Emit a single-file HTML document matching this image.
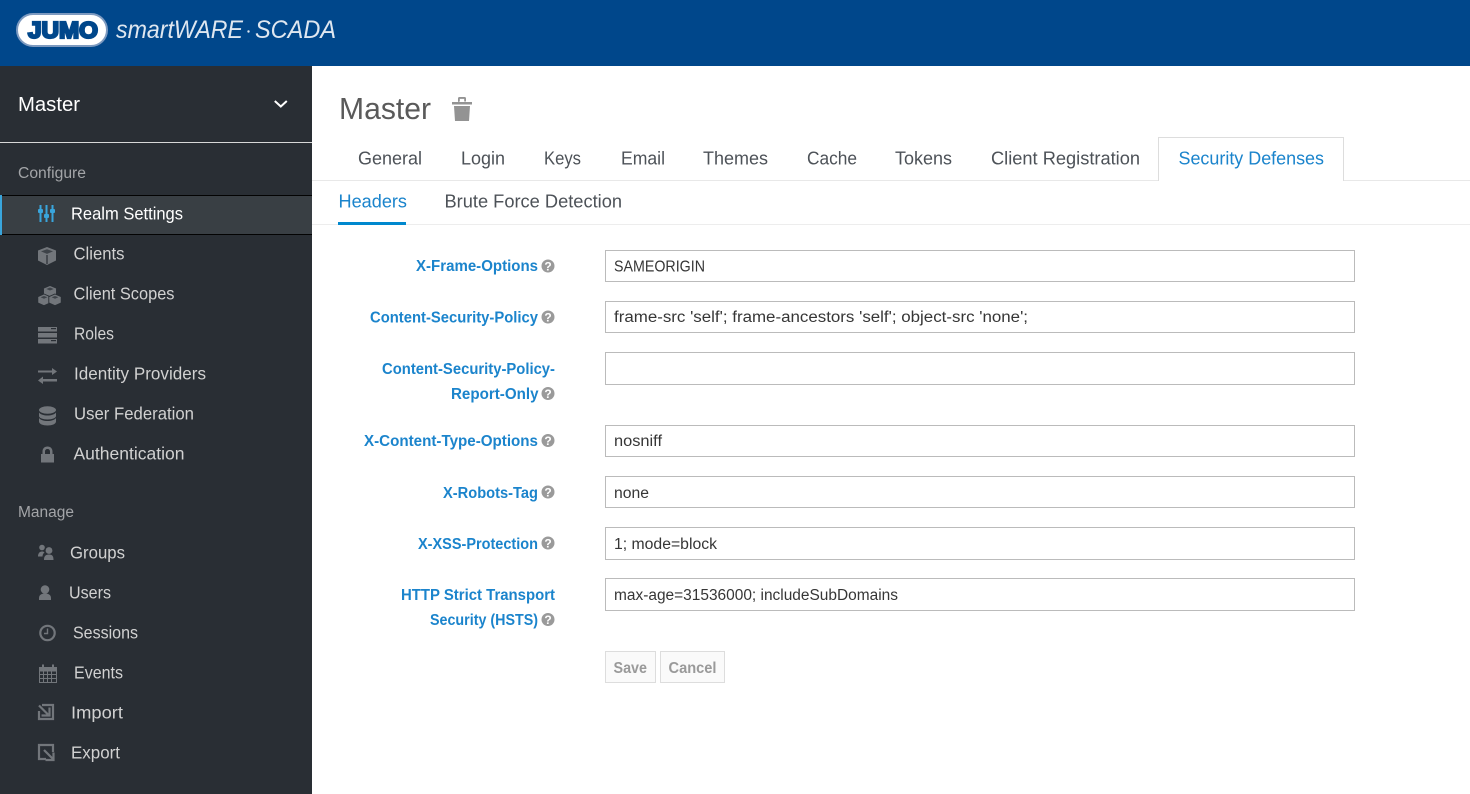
<!DOCTYPE html>
<html lang="en"><head><meta charset="utf-8"><title>Master</title>
<style>
html,body{margin:0;padding:0;width:1470px;height:794px;overflow:hidden;background:#fff}
svg{display:block}
text{font-family:"Liberation Sans",sans-serif}
.n{font-size:17.5px;fill:#d1d1d1}
.g{font-size:15.5px;fill:#a3a5a8}
.t{font-size:18.5px;fill:#4d5258}
.l{font-size:15.5px;font-weight:700;fill:#1b84cc}
.i{font-size:15.5px;fill:#363636}
.b{font-size:15.5px;font-weight:700;fill:#9a9a9a}
.ic{fill:#72767b}
.f{fill:#fff;stroke:#bbb;stroke-width:1}
</style></head><body>
<svg xmlns="http://www.w3.org/2000/svg" width="1470" height="794" viewBox="0 0 1470 794">
<defs>
<g id="h"><circle cx="6.500" cy="6.500" r="6.500" fill="#9a9a9a"/><text x="6.500" y="11" text-anchor="middle" style="font-size:12px;font-weight:700;fill:#fff">?</text></g>
</defs>
<!-- header -->
<rect width="1470" height="66" fill="#00478b"/>
<rect x="17" y="14" width="90" height="32" rx="16" fill="#fff" stroke="#7d9ac0" stroke-width="2"/>
<text x="28" y="38" textLength="70" lengthAdjust="spacingAndGlyphs" style="font-size:23px;font-weight:700;fill:#00478b;stroke:#00478b;stroke-width:2.200">JUMO</text>
<g style="font-style:italic;font-size:25px">
<text x="116" y="38" textLength="127" lengthAdjust="spacingAndGlyphs" fill="#dfe7f0">smartWARE</text>
<circle cx="248.500" cy="31.500" r="1.200" fill="#dfe7f0"/>
<text x="255" y="38" textLength="81" lengthAdjust="spacingAndGlyphs" fill="#dfe7f0">SCADA</text>
</g>
<!-- sidebar -->
<rect y="66" width="312" height="728" fill="#292e34"/>
<text x="18" y="111" textLength="62" lengthAdjust="spacingAndGlyphs" style="font-size:20.5px;fill:#fff">Master</text>
<path d="M274.800 101l6 5.500 6-5.500" fill="none" stroke="#fff" stroke-width="2"/>
<rect y="142" width="312" height="1" fill="#d8d8d8"/>
<text class="g" x="18" y="178" textLength="68" lengthAdjust="spacingAndGlyphs">Configure</text>
<rect y="195" width="312" height="40" fill="#393f44"/>
<rect y="195" width="312" height="1" fill="#030303"/>
<rect y="234" width="312" height="1" fill="#030303"/>
<rect y="195" width="2" height="40" fill="#39a5dc"/>
<!-- sliders -->
<g fill="#39a5dc">
<rect x="39.500" y="205" width="2" height="17"/><rect x="45.500" y="205" width="2" height="17"/><rect x="51.500" y="205" width="2" height="17"/>
<rect x="38" y="209" width="5" height="4" rx="1"/><rect x="44" y="214" width="5" height="4" rx="1"/><rect x="50" y="209" width="5" height="4" rx="1"/>
</g>
<text class="n" x="71" y="219.500" textLength="112" lengthAdjust="spacingAndGlyphs" style="fill:#fff">Realm Settings</text>
<!-- cube -->
<path class="ic" d="M47 247l9 3.500v10L47 265l-9-4.500v-10z"/>
<path d="M47 249.200l-6 2.200 6 2.500 6-2.500z" fill="#3e4349"/>
<path d="M47 255v9" stroke="#292e34" stroke-width="1.200"/>
<text class="n" x="73.500" y="259.500" textLength="51" lengthAdjust="spacingAndGlyphs">Clients</text>
<!-- cubes -->
<g class="ic" stroke="#292e34" stroke-width=".9">
<path d="M50 285.500l6.500 2.700v6.500L50 297.500l-6.500-2.800v-6.500z"/>
<path d="M44 294l6.200 2.700v6.200L44 305.700l-6.200-2.800v-6.200z"/>
<path d="M55 294l6.200 2.700v6.200L55 305.700l-6.200-2.800v-6.200z"/>
</g>
<path d="M50 287.500l-3.700 1.500 3.700 1.500 3.700-1.500zM44 296l-3.400 1.300 3.400 1.400 3.400-1.400zM55 296l-3.400 1.300 3.400 1.400 3.400-1.400z" fill="#3e4349"/>
<text class="n" x="73.500" y="299.500" textLength="101" lengthAdjust="spacingAndGlyphs">Client Scopes</text>
<!-- roles -->
<path class="ic" d="M38 327h19v4.500H38zM38 333h19v4.500H38zM38 339h19v4.500H38z"/>
<rect x="51" y="328" width="5" height="1.200" fill="#292e34"/><rect x="51" y="340" width="5" height="1.200" fill="#292e34"/>
<text class="n" x="74" y="339.500" textLength="40" lengthAdjust="spacingAndGlyphs">Roles</text>
<!-- idp -->
<path class="ic" d="M38 370.500h14V368l5 3.500-5 3.500v-2.500H38zM43 376.500v2.500h14v2.500H43v2.500L38 380.500z"/>
<text class="n" x="74" y="379.500" textLength="132" lengthAdjust="spacingAndGlyphs">Identity Providers</text>
<!-- db -->
<g class="ic">
<ellipse cx="47.500" cy="410" rx="8.500" ry="3.700"/>
<path d="M39 412.500c1.500 2 5 3 8.500 3s7-1 8.500-3v3.500c0 2-4 3.500-8.500 3.500S39 418 39 416zM39 418c1.500 2 5 3 8.500 3s7-1 8.500-3v3.500c0 2.500-4 4-8.500 4s-8.500-1.500-8.500-4z"/>
</g>
<text class="n" x="74" y="419.500" textLength="120" lengthAdjust="spacingAndGlyphs">User Federation</text>
<!-- lock -->
<path class="ic" d="M41 454h1.500v-2.500c0-3 2-5 5-5s5 2 5 5v2.500H54v8.500H41zM45 454h5v-2.500c0-1.500-1-2.500-2.500-2.500s-2.500 1-2.500 2.500z"/>
<text class="n" x="73.500" y="459.500" textLength="111" lengthAdjust="spacingAndGlyphs">Authentication</text>

<text class="g" x="18" y="517" textLength="56" lengthAdjust="spacingAndGlyphs">Manage</text>
<!-- groups -->
<g class="ic"><circle cx="42" cy="547.500" r="2.800"/><circle cx="49" cy="550.500" r="3.400"/><path d="M38 556.500c0-3 1.500-5 4-5 1 0 2 .3 2.500.8-1.300 1.200-2 2.700-2 4.200zM44 560c0-3.800 1.500-5.500 5-5.500s4.500 1.700 4.500 5.500z"/></g>
<text class="n" x="70" y="558.500" textLength="55" lengthAdjust="spacingAndGlyphs">Groups</text>
<!-- users -->
<g class="ic"><circle cx="45" cy="589.500" r="4.300"/><path d="M39 600v-2c0-3 2.500-4.500 6-4.500s6 1.500 6 4.500v2z"/></g>
<text class="n" x="69" y="598.500" textLength="42" lengthAdjust="spacingAndGlyphs">Users</text>
<!-- clock -->
<circle cx="47.500" cy="633" r="7.200" fill="none" stroke="#72767b" stroke-width="2.200"/>
<path d="M47.500 628.500v5h-3.500" fill="none" stroke="#72767b" stroke-width="1.400"/>
<text class="n" x="73" y="638.500" textLength="65" lengthAdjust="spacingAndGlyphs">Sessions</text>
<!-- calendar -->
<rect x="39.500" y="667.500" width="17" height="15" fill="none" stroke="#72767b"/>
<rect x="39" y="667" width="18" height="4.500" fill="#72767b"/>
<rect x="42" y="664.500" width="2" height="4.500" fill="#72767b"/><rect x="52" y="664.500" width="2" height="4.500" fill="#72767b"/>
<path d="M43.500 671v11M47.500 671v11M51.500 671v11M40 674.500h16M40 678.500h16" stroke="#72767b" stroke-width="1"/>
<text class="n" x="74" y="678.500" textLength="49" lengthAdjust="spacingAndGlyphs">Events</text>
<!-- import -->
<path d="M42 705h11v14H39v-8" fill="none" stroke="#72767b" stroke-width="2.200"/>
<path d="M39 705.500l9 9M49.500 707.500v8H41.500" fill="none" stroke="#72767b" stroke-width="2.200"/>
<text class="n" x="71" y="718.500" textLength="52" lengthAdjust="spacingAndGlyphs">Import</text>
<!-- export -->
<path d="M46 759h-7v-14h14v7" fill="none" stroke="#72767b" stroke-width="2.200"/>
<path d="M44 750l9.500 9.500M53.500 752.500v7.500h-8" fill="none" stroke="#72767b" stroke-width="2.200"/>
<text class="n" x="71" y="758.500" textLength="49" lengthAdjust="spacingAndGlyphs">Export</text>

<!-- title -->
<text x="339" y="119" textLength="92" lengthAdjust="spacingAndGlyphs" style="font-size:31px;fill:#5a5a5a">Master</text>
<path d="M452 102h20v2.500h-20zM458 102v-3.500c0-1 .5-1.500 1.500-1.500h5c1 0 1.500.5 1.500 1.500v3h-1.800v-2.600h-4.400v2.600zM454 106h16l-1 15h-14z" fill="#939393"/>

<!-- tabs -->
<rect x="312" y="180" width="1158" height="1" fill="#e8e8e8"/>
<path d="M1158.500 181V137.500H1343.500V181" fill="#fff" stroke="#ddd"/>
<text class="t" x="358" y="164.500" textLength="64" lengthAdjust="spacingAndGlyphs">General</text>
<text class="t" x="461" y="164.500" textLength="44" lengthAdjust="spacingAndGlyphs">Login</text>
<text class="t" x="544" y="164.500" textLength="37" lengthAdjust="spacingAndGlyphs">Keys</text>
<text class="t" x="621" y="164.500" textLength="44" lengthAdjust="spacingAndGlyphs">Email</text>
<text class="t" x="703" y="164.500" textLength="65" lengthAdjust="spacingAndGlyphs">Themes</text>
<text class="t" x="807" y="164.500" textLength="50" lengthAdjust="spacingAndGlyphs">Cache</text>
<text class="t" x="895" y="164.500" textLength="57" lengthAdjust="spacingAndGlyphs">Tokens</text>
<text class="t" x="991" y="164.500" textLength="149" lengthAdjust="spacingAndGlyphs">Client Registration</text>
<text class="t" x="1178.500" y="164.500" textLength="145.500" lengthAdjust="spacingAndGlyphs" style="fill:#1b84cc">Security Defenses</text>

<!-- subtabs -->
<rect x="312" y="224" width="1158" height="1" fill="#ededed"/>
<rect x="338" y="222" width="68" height="3" fill="#0088ce"/>
<text class="t" x="338.500" y="207.500" textLength="68.500" lengthAdjust="spacingAndGlyphs" style="fill:#1b84cc">Headers</text>
<text class="t" x="444.500" y="207.500" textLength="177.500" lengthAdjust="spacingAndGlyphs">Brute Force Detection</text>

<!-- labels -->
<text class="l" x="416" y="271" textLength="122" lengthAdjust="spacingAndGlyphs">X-Frame-Options</text><use href="#h" x="541.500" y="259.500"/>
<text class="l" x="370" y="322.500" textLength="168" lengthAdjust="spacingAndGlyphs">Content-Security-Policy</text><use href="#h" x="541.500" y="310.500"/>
<text class="l" x="382" y="374" textLength="173" lengthAdjust="spacingAndGlyphs">Content-Security-Policy-</text>
<text class="l" x="451" y="399" textLength="87.500" lengthAdjust="spacingAndGlyphs">Report-Only</text><use href="#h" x="541.500" y="387"/>
<text class="l" x="364" y="446" textLength="174" lengthAdjust="spacingAndGlyphs">X-Content-Type-Options</text><use href="#h" x="541.500" y="434"/>
<text class="l" x="443" y="498" textLength="95" lengthAdjust="spacingAndGlyphs">X-Robots-Tag</text><use href="#h" x="541.500" y="485.500"/>
<text class="l" x="418" y="549" textLength="120" lengthAdjust="spacingAndGlyphs">X-XSS-Protection</text><use href="#h" x="541.500" y="536.500"/>
<text class="l" x="401" y="600" textLength="154" lengthAdjust="spacingAndGlyphs">HTTP Strict Transport</text>
<text class="l" x="430" y="625" textLength="108" lengthAdjust="spacingAndGlyphs">Security (HSTS)</text><use href="#h" x="541.500" y="613"/>

<!-- inputs -->
<rect class="f" x="605.500" y="250.500" width="749" height="31"/>
<text class="i" x="614" y="271.500" textLength="91" lengthAdjust="spacingAndGlyphs">SAMEORIGIN</text>
<rect class="f" x="605.500" y="301.500" width="749" height="31"/>
<text class="i" x="614" y="322" textLength="414" lengthAdjust="spacingAndGlyphs">frame-src 'self'; frame-ancestors 'self'; object-src 'none';</text>
<rect class="f" x="605.500" y="352.500" width="749" height="32"/>
<rect class="f" x="605.500" y="425.500" width="749" height="31"/>
<text class="i" x="614" y="446" textLength="48" lengthAdjust="spacingAndGlyphs">nosniff</text>
<rect class="f" x="605.500" y="476.500" width="749" height="31"/>
<text class="i" x="614" y="498" textLength="35" lengthAdjust="spacingAndGlyphs">none</text>
<rect class="f" x="605.500" y="527.500" width="749" height="32"/>
<text class="i" x="614" y="549" textLength="103" lengthAdjust="spacingAndGlyphs">1; mode=block</text>
<rect class="f" x="605.500" y="578.500" width="749" height="32"/>
<text class="i" x="614" y="600" textLength="284" lengthAdjust="spacingAndGlyphs">max-age=31536000; includeSubDomains</text>

<!-- buttons -->
<rect x="605.500" y="651.500" width="50" height="31" fill="#fafafa" stroke="#ddd"/>
<text class="b" x="613.500" y="673" textLength="33.500" lengthAdjust="spacingAndGlyphs">Save</text>
<rect x="660.500" y="651.500" width="64" height="31" fill="#fafafa" stroke="#ddd"/>
<text class="b" x="668.500" y="673" textLength="48" lengthAdjust="spacingAndGlyphs">Cancel</text>
</svg>
</body></html>
